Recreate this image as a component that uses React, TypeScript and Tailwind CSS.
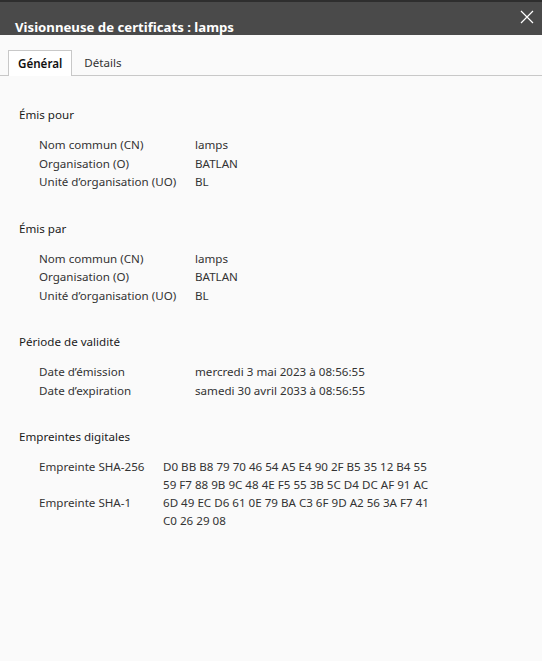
const issuedTo = [
  { label: "Nom commun (CN)", value: "lamps" },
  { label: "Organisation (O)", value: "BATLAN" },
  { label: "Unité d’organisation (UO)", value: "BL" },
];

const validity = [
  { label: "Date d’émission", value: "mercredi 3 mai 2023 à 08:56:55" },
  { label: "Date d’expiration", value: "samedi 30 avril 2033 à 08:56:55" },
];

const prints = [
  {
    label: "Empreinte SHA-256",
    lines: [
      "D0 BB B8 79 70 46 54 A5 E4 90 2F B5 35 12 B4 55",
      "59 F7 88 9B 9C 48 4E F5 55 3B 5C D4 DC AF 91 AC",
    ],
  },
  {
    label: "Empreinte SHA-1",
    lines: ["6D 49 EC D6 61 0E 79 BA C3 6F 9D A2 56 3A F7 41", "C0 26 29 08"],
  },
];

function Section({
  title,
  rows,
}: {
  title: string;
  rows: { label: string; value: string }[];
}) {
  return (
    <div className="mb-[27px]">
      <h3 className="h-[19px] leading-[19px] text-[#1a1a1a]">{title}</h3>
      <div className="mt-[12px] pl-[20px]">
        {rows.map((r) => (
          <div key={r.label} className="flex leading-[18.5px] text-[#333]">
            <span className="w-[156px] shrink-0">{r.label}</span>
            <span>{r.value}</span>
          </div>
        ))}
      </div>
    </div>
  );
}

export default function App() {
  return (
    <div
      className="flex h-[661px] w-[542px] flex-col overflow-hidden bg-[#fafafa] text-[11.6px]"
      style={{ fontFamily: '"Noto Sans", sans-serif' }}
    >
      {/* title bar */}
      <div className="relative h-[35px] shrink-0 overflow-hidden border-t-2 border-[#2e2e2e] bg-[#4a4a4a]">
        <span className="absolute left-[15px] top-[16px] text-[13.2px] font-bold leading-[19px] text-white">
          Visionneuse de certificats : lamps
        </span>
        <svg
          className="absolute right-[8px] top-[8px]"
          width="14"
          height="14"
          viewBox="0 0 14 14"
        >
          <path d="M1 1L13 13M13 1L1 13" stroke="#fff" strokeWidth="1.2" />
        </svg>
      </div>

      {/* tabs */}
      <div className="mt-[15px] flex h-[26px] shrink-0 items-end border-b border-[#c8c8c8] pl-[8px]">
        <div className="-mb-px flex h-[26px] items-center border border-b-0 border-[#c8c8c8] bg-white px-[9px] pt-[1px] font-semibold text-[#111]">
          Général
        </div>
        <div className="flex h-[25px] items-center px-[12px] pt-[1px] text-[#333]">Détails</div>
      </div>

      {/* body */}
      <div className="px-[19px] pt-[29px]">
        <Section title="Émis pour" rows={issuedTo} />
        <Section title="Émis par" rows={issuedTo} />
        <Section title="Période de validité" rows={validity} />

        <div>
          <h3 className="h-[19px] leading-[19px] text-[#1a1a1a]">Empreintes digitales</h3>
          <div className="mt-[12px] pl-[20px]">
            {prints.map((p) => (
              <div key={p.label} className="flex leading-[18px] text-[#333]">
                <span className="w-[124px] shrink-0">{p.label}</span>
                <div>
                  {p.lines.map((l) => (
                    <div key={l}>{l}</div>
                  ))}
                </div>
              </div>
            ))}
          </div>
        </div>
      </div>
    </div>
  );
}
